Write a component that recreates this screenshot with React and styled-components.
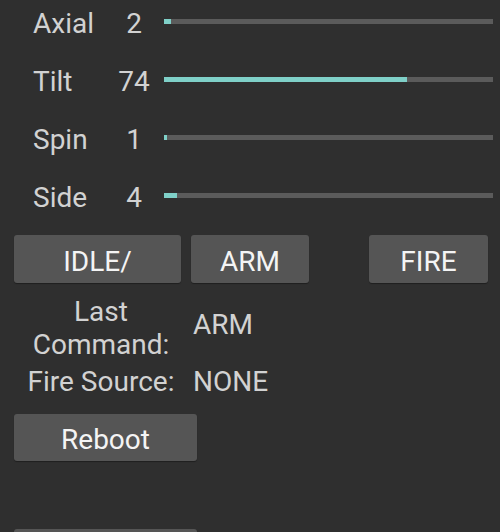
import React from "react";
import styled, { createGlobalStyle } from "styled-components";

const GlobalStyle = createGlobalStyle`
  html, body {
    margin: 0;
    padding: 0;
    background: #2f2f2f;
    overflow: hidden;
  }
  body {
    font-family: Roboto, "Liberation Sans", sans-serif;
  }
`;

const Page = styled.div`
  width: 500px;
  height: 532px;
  overflow: hidden;
  background: #2f2f2f;
  color: #d2d2d2;
  font-size: 28px;
`;

const Sliders = styled.div`
  display: flex;
  flex-direction: column;
  gap: 16px;
`;

const SliderRow = styled.div`
  display: flex;
  align-items: center;
  height: 42px;
  padding-left: 33px;
`;

const Label = styled.span`
  width: 85px;
  padding-top: 4px;
`;

const Value = styled.span`
  width: 32px;
  padding-top: 4px;
  text-align: center;
`;

const Track = styled.div`
  margin-left: 14px;
  width: 329px;
  height: 5px;
  background: #5b5b5b;
`;

const Fill = styled.div`
  height: 100%;
  background: #7fd0c8;
`;

const ButtonRow = styled.div`
  display: flex;
  gap: 10px;
  margin-top: 19px;
  padding-left: 14px;
`;

const Button = styled.button`
  flex-shrink: 0;
  width: ${(p) => p.$w}px;
  height: ${(p) => p.$h || 48}px;
  margin-left: ${(p) => p.$ml || 0}px;
  border: none;
  border-radius: 3px;
  background: #555555;
  box-shadow: 0 1px 1px rgba(0, 0, 0, 0.35);
  color: #f4f4f4;
  font-family: inherit;
  font-size: 28px;
  padding: 4px 0 0;
`;

const Status = styled.div`
  display: grid;
  grid-template-columns: 174px auto;
  column-gap: 5px;
  row-gap: 4px;
  align-items: center;
  padding-left: 14px;
  margin-top: 12px;
  line-height: 33px;
`;

const StatusLabel = styled.div`
  text-align: center;
`;

const StatusValue = styled.div`
  margin-top: ${(p) => p.$mt || 0}px;
`;

const Stack = styled.div`
  display: flex;
  flex-direction: column;
  gap: 68px;
  padding-left: 14px;
  margin-top: 16px;
`;

const sliders = [
  { name: "Axial", value: 2 },
  { name: "Tilt", value: 74 },
  { name: "Spin", value: 1 },
  { name: "Side", value: 4 },
];

export default function App() {
  return (
    <Page>
      <GlobalStyle />
      <Sliders>
        {sliders.map((s) => (
          <SliderRow key={s.name}>
            <Label>{s.name}</Label>
            <Value>{s.value}</Value>
            <Track>
              <Fill style={{ width: `${s.value}%` }} />
            </Track>
          </SliderRow>
        ))}
      </Sliders>
      <ButtonRow>
        <Button $w={167}>IDLE/</Button>
        <Button $w={118}>ARM</Button>
        <Button $w={119} $ml={50}>FIRE</Button>
      </ButtonRow>
      <Status>
        <StatusLabel>
          Last
          <br />
          Command:
        </StatusLabel>
        <StatusValue $mt={-7}>ARM</StatusValue>
        <StatusLabel>Fire Source:</StatusLabel>
        <StatusValue>NONE</StatusValue>
      </Status>
      <Stack>
        <Button $w={183} $h={47}>Reboot</Button>
        <Button $w={183} $h={47} />
      </Stack>
    </Page>
  );
}
